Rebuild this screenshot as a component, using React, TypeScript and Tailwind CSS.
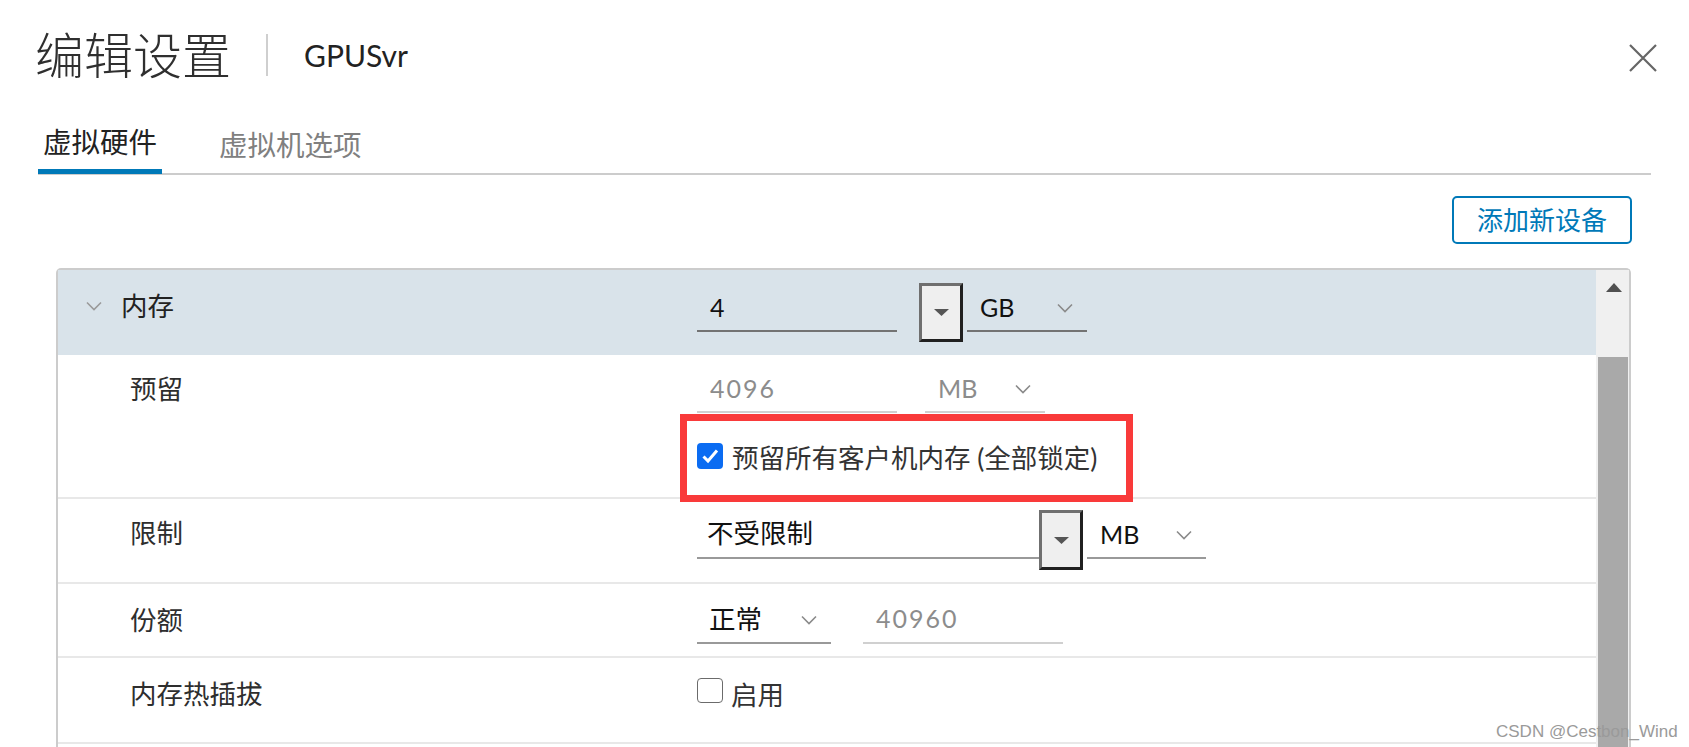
import React from "react";

function Chevron({ className }: { className?: string }) {
  return (
    <svg width="16" height="10" viewBox="0 0 16 10" className={className}>
      <path d="M1 1.5l7 7 7-7" fill="none" stroke="currentColor" strokeWidth="1.6" />
    </svg>
  );
}

function BevelButton({ className }: { className: string }) {
  return (
    <div
      className={`flex shrink-0 items-center justify-center border-[3px] border-t-[#6f6f6f] border-l-[#6f6f6f] border-r-[#202020] border-b-[#202020] bg-[#efefef] ${className}`}
    >
      <svg width="15" height="7" viewBox="0 0 15 7">
        <path d="M0 0h15L7.5 7z" fill="#555" />
      </svg>
    </div>
  );
}

function Label({ children, pt }: { children: React.ReactNode; pt: string }) {
  return (
    <div className={`w-[639px] shrink-0 pl-[72px] text-[26.5px] leading-[32px] text-[#2e2e2e] ${pt}`}>
      {children}
    </div>
  );
}

export default function App() {
  return (
    <div className="relative h-[747px] w-[1689px] overflow-hidden bg-white font-['Lato','Noto_Sans_CJK_SC',sans-serif]">
      {/* title bar */}
      <div className="mt-[30px] flex h-[50px] items-center pl-[35px] pr-[32px]">
        <h1 className="text-[49px] leading-none font-light text-[#2f2f2f]">编辑设置</h1>
        <div className="ml-[35px] h-[42px] w-[2px] bg-[#cfcfcf]" />
        <span className="ml-[36px] text-[30px] text-[#222]">GPUSvr</span>
        <button className="ml-auto mt-[6px] text-[#666]">
          <svg width="28" height="28" viewBox="0 0 28 28">
            <path d="M1 1l26 26M27 1L1 27" stroke="currentColor" strokeWidth="2.2" />
          </svg>
        </button>
      </div>

      {/* tabs */}
      <div className="ml-[38px] mr-[38px] mt-[35px] flex h-[60px] border-b-2 border-[#cccccc]">
        <div className="flex h-[59px] items-center border-b-[5px] border-[#0079b8] px-[5px] pt-px text-[28.5px] text-[#222]">
          虚拟硬件
        </div>
        <div className="ml-[52px] flex h-[59px] items-center px-[5px] pt-px text-[28.5px] text-[#808080]">
          虚拟机选项
        </div>
      </div>

      {/* add device */}
      <div className="mr-[57px] mt-[21px] flex justify-end">
        <button className="flex h-[48px] w-[180px] items-center justify-center rounded-[5px] border-2 border-[#0079b8] text-[26px] text-[#0079b8]">
          添加新设备
        </button>
      </div>

      {/* hardware panel */}
      <div className="ml-[56px] mt-[24px] flex w-[1575px] rounded-t-[5px] border-x-2 border-t-2 border-[#cccccc]">
        <div className="w-[1538px] shrink-0">
          {/* memory header */}
          <div className="flex h-[85px] items-start bg-[#d9e3ea]">
            <div className="flex w-[639px] shrink-0 items-center gap-[19px] pl-[28px] pt-[20px] text-[26.5px] leading-[32px] text-[#222]">
              <Chevron className="text-[#9a9a9a]" />
              <span>内存</span>
            </div>
            <div className="mt-[22px] flex h-[40px] w-[200px] items-center border-b-2 border-[#737373] pb-[6px] pl-[13px] text-[25px] text-[#111]">
              4
            </div>
            <BevelButton className="ml-[22px] mt-[13px] h-[59px] w-[44px]" />
            <div className="ml-[4px] mt-[22px] flex h-[40px] w-[120px] items-center justify-between border-b-2 border-[#737373] pb-[6px] pl-[13px] pr-[14px] text-[25px] text-[#111]">
              <span>GB</span>
              <Chevron className="text-[#8a8a8a]" />
            </div>
          </div>

          {/* reservation */}
          <div className="relative flex h-[144px] items-start border-b-2 border-[#e8e8e8]">
            <Label pt="pt-[18px]">预留</Label>
            <div className="flex flex-col">
              <div className="mt-[18px] flex">
                <div className="flex h-[40px] w-[200px] items-center border-b-2 border-[#d0d0d0] pb-[6px] pl-[13px] text-[25px] tracking-[2px] text-[#8c8c8c]">
                  4096
                </div>
                <div className="ml-[28px] flex h-[40px] w-[120px] items-center justify-between border-b-2 border-[#d0d0d0] pb-[6px] pl-[13px] pr-[14px] text-[25px] text-[#8c8c8c]">
                  <span>MB</span>
                  <Chevron className="text-[#8a8a8a]" />
                </div>
              </div>
              <div className="mt-[30px] flex items-start gap-[9px]">
                <div className="flex h-[26px] w-[26px] items-center justify-center rounded-[4px] bg-[#0b6cf2]">
                  <svg width="20" height="20" viewBox="0 0 20 20">
                    <path d="M3.5 10.5l4.5 4.5L17 4.5" fill="none" stroke="white" strokeWidth="3" />
                  </svg>
                </div>
                <span className="-mt-px text-[26.5px] leading-[32px] text-[#333]">预留所有客户机内存 (全部锁定)</span>
              </div>
            </div>
            <div className="pointer-events-none absolute left-[622px] top-[59px] h-[88px] w-[453px] border-[7px] border-[#f93a3a]" />
          </div>

          {/* limit */}
          <div className="flex h-[85px] items-start border-b-2 border-[#e8e8e8]">
            <Label pt="pt-[18px]">限制</Label>
            <div className="mt-[20px] flex h-[40px] w-[343px] shrink-0 items-center border-b-2 border-[#999] pb-[8px] pl-[10px] text-[26.5px] text-[#111]">
              不受限制
            </div>
            <BevelButton className="-ml-px mt-[11px] h-[60px] w-[44px]" />
            <div className="ml-[4px] mt-[20px] flex h-[40px] w-[119px] items-center justify-between border-b-2 border-[#999] pb-[6px] pl-[13px] pr-[14px] text-[25px] text-[#111]">
              <span>MB</span>
              <Chevron className="text-[#8a8a8a]" />
            </div>
          </div>

          {/* shares */}
          <div className="flex h-[74px] items-start border-b-2 border-[#e8e8e8]">
            <Label pt="pt-[20px]">份额</Label>
            <div className="mt-[18px] flex h-[42px] w-[134px] items-center justify-between border-b-2 border-[#999] pb-[4px] pl-[12px] pr-[14px] text-[26.5px] text-[#111]">
              <span>正常</span>
              <Chevron className="text-[#8a8a8a]" />
            </div>
            <div className="ml-[32px] mt-[18px] flex h-[42px] w-[200px] items-center border-b-2 border-[#d0d0d0] pb-[6px] pl-[13px] text-[25px] tracking-[2px] text-[#8c8c8c]">
              40960
            </div>
          </div>

          {/* hot plug */}
          <div className="flex h-[86px] items-start border-b-2 border-[#e8e8e8]">
            <Label pt="pt-[20px]">内存热插拔</Label>
            <div className="mt-[20px] h-[25px] w-[26px] rounded-[4px] border-[1.5px] border-[#6b6b6b] bg-white" />
            <span className="ml-[8px] mt-[21px] text-[26.5px] leading-[32px] text-[#333]">启用</span>
          </div>
          <div className="h-[40px]" />
        </div>

        {/* scrollbar */}
        <div className="flex w-[33px] shrink-0 flex-col bg-[#f0f0f0]">
          <div className="flex h-[87px] justify-center pl-[2px] pt-[13px]">
            <svg width="16" height="9" viewBox="0 0 16 9">
              <path d="M8 0L16 9H0z" fill="#505050" />
            </svg>
          </div>
          <div className="ml-[2px] mr-px h-[420px] bg-[#a9a9a9]" />
        </div>
      </div>

      <div className="absolute left-[1496px] top-[719px] font-['Liberation_Sans',sans-serif] text-[17px] text-[#9a9a9a]">
        CSDN @Cestbon_Wind
      </div>
    </div>
  );
}
